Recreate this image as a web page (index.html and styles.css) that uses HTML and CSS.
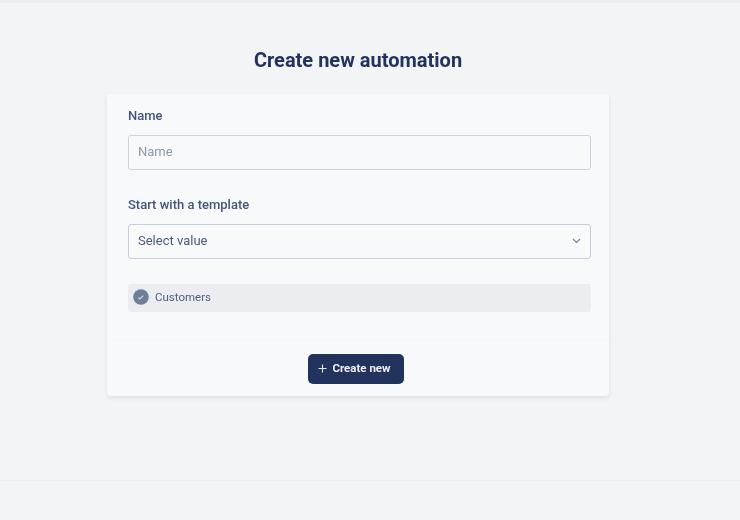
FILE: index.html
```html
<!DOCTYPE html>
<html lang="en">
<head>
<meta charset="utf-8">
<title>Create new automation</title>
<link rel="stylesheet" href="styles.css">
</head>
<body>
<div class="top-strip"></div>
<main class="main">
  <h1 class="title">Create new automation</h1>
  <section class="card">
    <div class="card-body">
      <label class="label label-name" for="name">Name</label>
      <input class="input" id="name" type="text" placeholder="Name">
      <div class="label label-template">Start with a template</div>
      <div class="select">
        <span>Select value</span>
        <svg class="chevron" width="9" height="6" viewBox="0 0 9 6" aria-hidden="true"><path d="M1 1l3.500 3.500L8 1" fill="none" stroke="#77839a" stroke-width="1.2"/></svg>
      </div>
      <div class="chip">
        <svg class="check" width="16" height="16" viewBox="0 0 16 16" aria-hidden="true"><circle cx="8" cy="8" r="7.8" fill="#6f7f99"/><path d="M5.400 8.700l1.500 1.200 3.400-3.200" fill="none" stroke="#d5dae3" stroke-width="1.1"/></svg>
        <span>Customers</span>
      </div>
    </div>
    <div class="card-footer">
      <button class="button" type="button">
        <svg width="9" height="9" viewBox="0 0 9 9" aria-hidden="true"><path d="M4.500 0.500v8M0.500 4.500h8" fill="none" stroke="#e8ebf2" stroke-width="1.1"/></svg>
        <span>Create new</span>
      </button>
    </div>
  </section>
</main>
<div class="footer-space"></div>
</body>
</html>
```

FILE: styles.css
```css
* { box-sizing: border-box; }
html, body { margin: 0; height: 100%; }
body {
  background: #f3f4f6;
  font-family: Roboto, "Liberation Sans", sans-serif;
  color: #22335e;
  overflow: hidden;
  display: flex;
  flex-direction: column;
}
.top-strip { height: 3px; background: #ecedf0; flex: none; }
.main {
  flex: none;
  height: 478px;
  border-bottom: 1px solid #eceef1;
  display: flex;
  flex-direction: column;
  align-items: flex-start;
  padding: 45px 0 0 107px;
  filter: blur(0.6px);
}
.title {
  width: 502px;
  margin: 0 0 22px;
  font-size: 20px;
  line-height: 24px;
  font-weight: 700;
  text-align: center;
  color: #22335e;
}
.card {
  width: 502px;
  height: 302px;
  background: #f8f9fb;
  border-radius: 4px;
  box-shadow: 0 2px 4px rgba(40, 50, 80, 0.1);
}
.card-body {
  height: 246px;
  padding: 14px 18px 0 21px;
  border-bottom: 1px solid #f4f5f7;
  display: flex;
  flex-direction: column;
}
.label {
  font-size: 13px;
  line-height: 16px;
  font-weight: 500;
  color: #43557a;
}
.label-name { margin-bottom: 11px; }
.label-template { margin-top: 27px; margin-bottom: 11px; }
.input {
  display: block;
  width: 100%;
  height: 35px;
  padding: 0 9px 2px;
  background: transparent;
  border: 1px solid #ccd3e0;
  border-radius: 3px;
  font: 400 13px Roboto, sans-serif;
  outline: none;
}
.input::placeholder { color: #8e99ad; opacity: 1; }
.select {
  height: 35px;
  padding: 0 9px 2px;
  border: 1px solid #c6cedd;
  border-radius: 3px;
  display: flex;
  align-items: center;
  justify-content: space-between;
  font-size: 13px;
  color: #4a5a7c;
}
.chip {
  height: 28px;
  margin-top: 25px;
  padding: 0 0 3px 5px;
  background: #ecedf1;
  border-radius: 3px;
  display: flex;
  align-items: center;
  gap: 6px;
  font-size: 11.500px;
  color: #4f5e7e;
}
.card-footer {
  display: flex;
  justify-content: center;
  padding-top: 14px;
  padding-right: 5px;
}
.button {
  width: 96px;
  height: 30px;
  padding: 0 2px 2px 0;
  border: 0;
  border-radius: 5px;
  background: #22335e;
  color: #eef0f5;
  display: flex;
  align-items: center;
  justify-content: center;
  gap: 5px;
  font: 700 11.500px Roboto, sans-serif;
}
.footer-space { flex: 1; }
```
